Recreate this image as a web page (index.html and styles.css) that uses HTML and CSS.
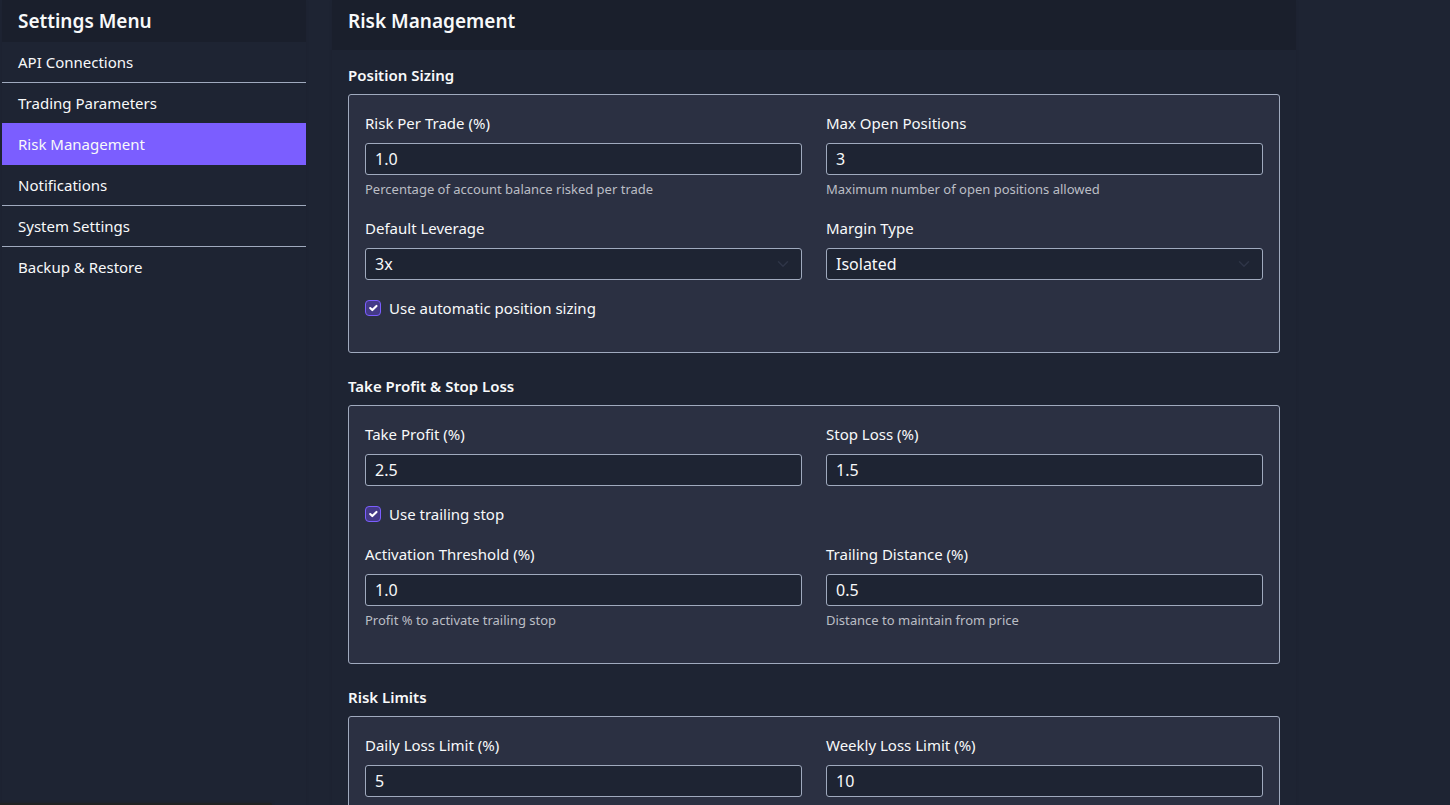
FILE: index.html
```html
<!DOCTYPE html>
<html lang="en">
<head>
<meta charset="utf-8">
<meta name="viewport" content="width=device-width, initial-scale=1">
<title>Risk Management</title>
<link rel="stylesheet" href="styles.css">
</head>
<body>
<div class="layout">
  <aside class="panel">
    <h2 class="panel-header">Settings Menu</h2>
    <nav class="menu">
      <a class="menu-item" href="#api">API Connections</a>
      <a class="menu-item" href="#trading">Trading Parameters</a>
      <a class="menu-item active" href="#risk" aria-current="page">Risk Management</a>
      <a class="menu-item" href="#notifications">Notifications</a>
      <a class="menu-item" href="#system">System Settings</a>
      <a class="menu-item" href="#backup">Backup &amp; Restore</a>
    </nav>
  </aside>
  <main class="panel">
    <h1 class="panel-header main-header">Risk Management</h1>
    <form class="panel-body">
      <section>
        <h3 class="section-title">Position Sizing</h3>
        <div class="group">
          <div class="field">
            <label for="risk">Risk Per Trade (%)</label>
            <input class="control" id="risk" type="number" step="0.1" value="1.0">
            <p class="help">Percentage of account balance risked per trade</p>
          </div>
          <div class="field">
            <label for="positions">Max Open Positions</label>
            <input class="control" id="positions" type="number" value="3">
            <p class="help">Maximum number of open positions allowed</p>
          </div>
          <div class="field">
            <label for="leverage">Default Leverage</label>
            <select class="control select" id="leverage"><option>3x</option></select>
          </div>
          <div class="field">
            <label for="margin">Margin Type</label>
            <select class="control select" id="margin"><option>Isolated</option></select>
          </div>
          <div class="check">
            <input class="checkbox" id="auto" type="checkbox" checked>
            <label for="auto">Use automatic position sizing</label>
          </div>
        </div>
      </section>
      <section>
        <h3 class="section-title">Take Profit &amp; Stop Loss</h3>
        <div class="group">
          <div class="field">
            <label for="profit">Take Profit (%)</label>
            <input class="control" id="profit" type="number" step="0.1" value="2.5">
          </div>
          <div class="field">
            <label for="loss">Stop Loss (%)</label>
            <input class="control" id="loss" type="number" step="0.1" value="1.5">
          </div>
          <div class="check">
            <input class="checkbox" id="trailing" type="checkbox" checked>
            <label for="trailing">Use trailing stop</label>
          </div>
          <div class="field">
            <label for="activation">Activation Threshold (%)</label>
            <input class="control" id="activation" type="number" step="0.1" value="1.0">
            <p class="help">Profit % to activate trailing stop</p>
          </div>
          <div class="field">
            <label for="distance">Trailing Distance (%)</label>
            <input class="control" id="distance" type="number" step="0.1" value="0.5">
            <p class="help">Distance to maintain from price</p>
          </div>
        </div>
      </section>
      <section>
        <h3 class="section-title">Risk Limits</h3>
        <div class="group">
          <div class="field">
            <label for="daily">Daily Loss Limit (%)</label>
            <input class="control" id="daily" type="number" value="5">
          </div>
          <div class="field">
            <label for="weekly">Weekly Loss Limit (%)</label>
            <input class="control" id="weekly" type="number" value="10">
          </div>
        </div>
      </section>
    </form>
  </main>
</div>
<div class="status-edge"></div>
</body>
</html>
```
FILE: styles.css
```css
* { box-sizing: border-box; }

body {
  margin: 0;
  height: 100vh;
  overflow: hidden;
  background: #1e2433;
  color: #f8f9fa;
  font: 15px/24px "Noto Sans", sans-serif;
}

h1, h2, h3, p { margin: 0; }

.layout {
  display: grid;
  grid-template-columns: 304fr 964fr;
  gap: 26px;
  max-width: 1296px;
  padding-left: 2px;
}

.panel {
  background: #1e2433;
  box-shadow: 0 2px 4px rgba(0, 0, 0, 0.08);
}

.panel-header {
  padding: 8px 16px;
  background: #1a1f2c;
  font-size: 19px;
  line-height: 26px;
  font-weight: 600;
}

.main-header { padding-bottom: 16px; }

.menu { display: flex; flex-direction: column; }

.menu-item {
  padding: 8px 16px;
  border-bottom: 1px solid #a0aabe;
  color: inherit;
  text-decoration: none;
}

.menu-item:last-child { border-bottom: 0; }

.menu-item.active {
  margin-top: -1px;
  border: solid #7b5eff;
  border-width: 1px 0;
  background: #7b5eff;
}

.panel-body {
  display: flex;
  flex-direction: column;
  gap: 24px;
  padding: 16px;
}

.section-title {
  margin-bottom: 10px;
  font-size: 15px;
  line-height: 18px;
  font-weight: 600;
}

.group {
  display: grid;
  grid-template-columns: 1fr 1fr;
  gap: 16px 24px;
  padding: 16px 16px 32px;
  border: 1px solid #a0aabe;
  border-radius: 3px;
  background: #2b3042;
}

.field { display: flex; flex-direction: column; }

.field label { margin-bottom: 8px; }

.control {
  width: 100%;
  height: 32px;
  padding: 0 9px;
  border: 1px solid #a0aabe;
  border-radius: 3px;
  outline: 0;
  background: #1e2433;
  color: inherit;
  font: inherit;
  font-size: 16px;
  appearance: none;
}

.control::-webkit-inner-spin-button { appearance: none; }

.select {
  background-image: url("data:image/svg+xml,%3Csvg xmlns='http://www.w3.org/2000/svg' viewBox='0 0 16 16'%3E%3Cpath fill='none' stroke='%232e3447' stroke-width='2' stroke-linecap='round' stroke-linejoin='round' d='m2 5 6 6 6-6'/%3E%3C/svg%3E");
  background-position: right 12px center;
  background-repeat: no-repeat;
  background-size: 12px;
}

.help {
  margin-top: 4px;
  color: #bbbec5;
  font-size: 13px;
  line-height: 21px;
}

.check {
  display: flex;
  grid-column: 1 / -1;
  align-items: center;
  gap: 8px;
}

.checkbox {
  width: 16px;
  height: 16px;
  margin: 0;
  border: 1px solid #7b5eff;
  border-radius: 4px;
  background: #443a87;
  appearance: none;
}

.checkbox:checked {
  background-image: url("data:image/svg+xml,%3Csvg xmlns='http://www.w3.org/2000/svg' viewBox='0 0 20 20'%3E%3Cpath fill='none' stroke='white' stroke-width='3' stroke-linecap='round' stroke-linejoin='round' d='m6 10 3 3 6-6'/%3E%3C/svg%3E");
}

.status-edge {
  position: fixed;
  bottom: 0;
  left: 0;
  width: 272px;
  height: 2px;
  border-top-right-radius: 4px;
  background: #202223;
  box-shadow: 0 0 3px #202223;
}
```
